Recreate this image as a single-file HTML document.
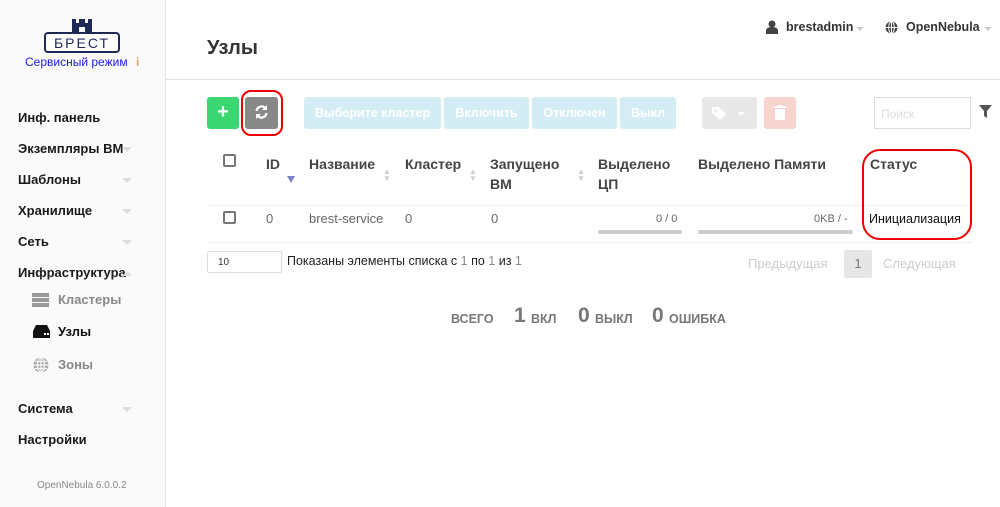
<!DOCTYPE html>
<html><head><meta charset="utf-8"><style>
*{box-sizing:border-box;margin:0;padding:0}
body{width:1000px;height:507px;overflow:hidden;background:#fff;font-family:"Liberation Sans","DejaVu Sans",sans-serif;position:relative;color:#222}
.a{position:absolute;white-space:nowrap}
#side{position:absolute;left:0;top:0;width:166px;height:507px;background:#fafafa;border-right:1px solid #e3e3e3}
.nav{position:absolute;left:18px;font-size:13px;font-weight:bold;color:#1a1a1a}
.car{position:absolute;left:122px;width:0;height:0;border-left:5px solid transparent;border-right:5px solid transparent;border-top:5px solid #ddd}
.sub{position:absolute;left:58px;font-size:13px;font-weight:bold;color:#888}
.btn{position:absolute;top:97px;height:32px;border-radius:3px}
.lb{background:#d4edf5;color:#fff;font-size:12.5px;font-weight:bold;line-height:32px;text-align:center}
.th{position:absolute;font-size:14px;font-weight:bold;color:#444;line-height:20px}
.td{position:absolute;font-size:13px;color:#666;top:211px}
.cb{position:absolute;width:13px;height:13px;border:2px solid #777;border-radius:2px}
.so{position:absolute;color:#ccc;font-size:8px;line-height:7px}
.sl{position:absolute;top:312px;font-size:12.5px;font-weight:bold;color:#777}
.sn{position:absolute;top:304px;font-size:21px;font-weight:bold;color:#777}
</style></head><body>
<div id="side">
 <svg class="a" style="left:43px;top:17px" width="78" height="37" viewBox="0 0 78 37">
  <path d="M29 2h4v4h3V2h6v4h3V2h4v14H29z" fill="#1e2a55"/>
  <rect x="36" y="10" width="6" height="6" fill="#fafafa"/>
  <rect x="2" y="16" width="74" height="19" rx="3" fill="#fff" stroke="#1e2a55" stroke-width="2"/>
  <text x="39" y="31" text-anchor="middle" font-family="Liberation Sans" font-size="14" fill="#1e2a55" letter-spacing="2">БРЕСТ</text>
 </svg>
 <div class="a" style="left:25px;top:55px;font-size:12px;color:#1a1aee">Сервисный режим</div>
 <div class="a" style="left:136px;top:55px;font-size:12px;color:#f0a070;font-weight:bold">i</div>
 <div class="nav" style="top:110px">Инф. панель</div>
 <div class="nav" style="top:141px">Экземпляры ВМ</div><div class="car" style="top:147px"></div>
 <div class="nav" style="top:172px">Шаблоны</div><div class="car" style="top:178px"></div>
 <div class="nav" style="top:203px">Хранилище</div><div class="car" style="top:209px"></div>
 <div class="nav" style="top:234px">Сеть</div><div class="car" style="top:240px"></div>
 <div class="nav" style="top:265px">Инфраструктура</div><div class="car" style="top:271px;border-top:0;border-bottom:5px solid #ddd"></div>
 <svg class="a" style="left:32px;top:292px" width="18" height="16"><rect x="0" y="1" width="17" height="4" fill="#999"/><rect x="0" y="6" width="17" height="4" fill="#999"/><rect x="0" y="11" width="17" height="4" fill="#999"/></svg>
 <div class="sub" style="top:292px">Кластеры</div>
 <svg class="a" style="left:32px;top:324px" width="19" height="15"><path d="M4 1h11l3 6v7H1V7z" fill="#111"/><rect x="12" y="9" width="2" height="2" fill="#fff"/><rect x="15" y="9" width="2" height="2" fill="#fff"/></svg>
 <div class="sub" style="top:324px;color:#111">Узлы</div>
 <svg class="a" style="left:33px;top:357px" width="16" height="16"><circle cx="8" cy="8" r="7.5" fill="#aaa"/><path d="M0.5 8h15M8 .5v15M2 4.5h12M2 11.5h12" stroke="#fafafa" stroke-width="1.2"/><ellipse cx="8" cy="8" rx="3.5" ry="7.5" fill="none" stroke="#fafafa" stroke-width="1.2"/></svg>
 <div class="sub" style="top:357px">Зоны</div>
 <div class="nav" style="top:401px">Система</div><div class="car" style="top:407px"></div>
 <div class="nav" style="top:432px">Настройки</div>
 <div class="a" style="left:37px;top:480px;font-size:10px;color:#888">OpenNebula 6.0.0.2</div>
</div>

<div class="a" style="left:207px;top:37px;font-size:20px;font-weight:bold;color:#333">Узлы</div>
<div class="a" style="left:166px;top:79px;width:834px;height:1px;background:#e3e3e3"></div>
<svg class="a" style="left:766px;top:20px" width="12" height="14"><circle cx="6" cy="4" r="3.5" fill="#444"/><path d="M0 14v-3q0-4 6-4t6 4v3z" fill="#444"/></svg>
<div class="a" style="left:786px;top:20px;font-size:12.5px;font-weight:bold;color:#333">brestadmin</div>
<div class="a" style="left:856px;top:27px;border-left:4px solid transparent;border-right:4px solid transparent;border-top:4px solid #ccc"></div>
<svg class="a" style="left:885px;top:21px" width="13" height="13"><circle cx="6.5" cy="6.5" r="6" fill="#444"/><path d="M.5 6.5h12M6.5 .5v12" stroke="#fff" stroke-width="1"/><ellipse cx="6.5" cy="6.5" rx="2.8" ry="6" fill="none" stroke="#fff"/></svg>
<div class="a" style="left:906px;top:20px;font-size:12.5px;font-weight:bold;color:#333">OpenNebula</div>
<div class="a" style="left:984px;top:27px;border-left:4px solid transparent;border-right:4px solid transparent;border-top:4px solid #ccc"></div>

<div class="btn" style="left:207px;width:32px;background:#3bd672;color:#fff;font-size:20px;font-weight:bold;text-align:center;line-height:31px">+</div>
<div class="btn" style="left:245px;width:33px;background:#888"></div>
<svg class="a" style="left:254px;top:104px" width="15" height="16" viewBox="0 0 15 16"><path d="M2.5 7a5 5 0 0 1 9-2.5M12.5 9a5 5 0 0 1-9 2.5" fill="none" stroke="#fff" stroke-width="2.2"/><path d="M13 1v5h-5z M2 15v-5h5z" fill="#fff"/></svg>
<div class="a" style="left:241px;top:90px;width:42px;height:46px;border:2px solid #e00;border-radius:10px"></div>
<div class="btn lb" style="left:304px;width:137px">Выберите кластер</div>
<div class="btn lb" style="left:444px;width:85px">Включить</div>
<div class="btn lb" style="left:532px;width:85px">Отключен</div>
<div class="btn lb" style="left:620px;width:56px">Выкл</div>
<div class="btn" style="left:702px;width:55px;background:#e8e8e8"></div>
<svg class="a" style="left:711px;top:106px" width="36" height="14"><path d="M1 1h7l7 7-6 6-8-7z" fill="#fff"/><circle cx="4.5" cy="4.5" r="1.3" fill="#e8e8e8"/><path d="M26 6h8l-4 4z" fill="#fff"/></svg>
<div class="btn" style="left:764px;width:32px;background:#f8d4d0"></div>
<svg class="a" style="left:774px;top:105px" width="12" height="15"><rect x="0" y="1" width="12" height="2" fill="#fff"/><rect x="4" y="0" width="4" height="2" fill="#fff"/><rect x="1" y="4" width="10" height="11" fill="#fff"/></svg>
<div class="a" style="left:874px;top:97px;width:97px;height:32px;border:1px solid #ddd;font-size:12px;color:#ddd;padding:9px 6px">Поиск</div>
<svg class="a" style="left:979px;top:105px" width="13" height="13"><path d="M0 0h13L8 6v7L5 11V6z" fill="#555"/></svg>

<div class="cb" style="left:223px;top:154px"></div>
<div class="th" style="left:266px;top:154px">ID</div>
<div class="a" style="left:287px;top:176px;border-left:4px solid transparent;border-right:4px solid transparent;border-top:7px solid #7a84c8"></div>
<div class="th" style="left:309px;top:154px">Название</div><div class="so" style="left:383px;top:168px">▲<br>▼</div>
<div class="th" style="left:405px;top:154px">Кластер</div><div class="so" style="left:469px;top:168px">▲<br>▼</div>
<div class="th" style="left:490px;top:154px">Запущено<br>ВМ</div><div class="so" style="left:577px;top:168px">▲<br>▼</div>
<div class="th" style="left:598px;top:154px">Выделено<br>ЦП</div>
<div class="th" style="left:698px;top:154px">Выделено Памяти</div>
<div class="th" style="left:870px;top:154px">Статус</div>
<div class="a" style="left:207px;top:205px;width:765px;height:1px;background:#eee"></div>
<div class="cb" style="left:223px;top:211px"></div>
<div class="td" style="left:266px">0</div>
<div class="td" style="left:309px">brest-service</div>
<div class="td" style="left:405px">0</div>
<div class="td" style="left:491px">0</div>
<div class="td" style="left:656px;font-size:11px;top:213px">0 / 0</div>
<div class="a" style="left:598px;top:230px;width:84px;height:4px;background:#ccc;border-radius:2px"></div>
<div class="td" style="left:814px;font-size:11px;top:213px">0KB / -</div>
<div class="a" style="left:698px;top:230px;width:155px;height:4px;background:#ccc;border-radius:2px"></div>
<div class="td" style="left:869px;color:#111;font-size:12.5px;top:212px">Инициализация</div>
<div class="a" style="left:207px;top:242px;width:765px;height:1px;background:#eee"></div>
<div class="a" style="left:862px;top:149px;width:110px;height:91px;border:2px solid #e00;border-radius:18px"></div>

<div class="a" style="left:207px;top:251px;width:75px;height:22px;border:1px solid #ddd;border-radius:2px;font-size:10px;color:#333;padding:5px 10px">10</div>
<div class="a" style="left:287px;top:254px;font-size:12.5px;color:#222">Показаны элементы списка с <span style="color:#888">1</span> по <span style="color:#888">1</span> из <span style="color:#888">1</span></div>
<div class="a" style="left:748px;top:256px;font-size:13px;color:#ccc">Предыдущая</div>
<div class="a" style="left:844px;top:250px;width:28px;height:28px;background:#e6e6e6;border-radius:2px;font-size:13px;color:#777;text-align:center;line-height:28px">1</div>
<div class="a" style="left:883px;top:256px;font-size:13px;color:#ccc">Следующая</div>

<div class="sl" style="left:451px">ВСЕГО</div>
<div class="sn" style="left:514px">1</div><div class="sl" style="left:531px">ВКЛ</div>
<div class="sn" style="left:578px">0</div><div class="sl" style="left:595px">ВЫКЛ</div>
<div class="sn" style="left:652px">0</div><div class="sl" style="left:669px">ОШИБКА</div>
</body></html>
